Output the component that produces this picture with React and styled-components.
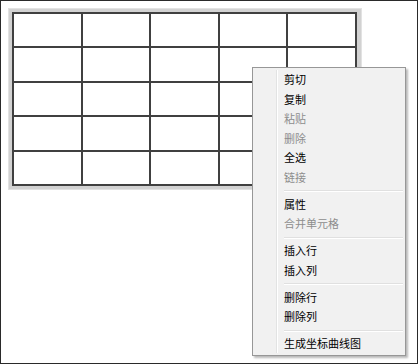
import React from "react";
import styled, { createGlobalStyle } from "styled-components";

const GlobalStyle = createGlobalStyle`
  html, body {
    margin: 0;
    padding: 0;
    background: #ffffff;
  }
`;

const Page = styled.div`
  position: relative;
  box-sizing: border-box;
  width: 418px;
  height: 364px;
  padding: 7px;
  border: 1px solid #2a2a2a;
  background: #ffffff;
  font-family: "Noto Sans CJK SC", "Noto Sans", sans-serif;
`;

const Frame = styled.div`
  display: inline-block;
  padding: 4px 5px 4px 4px;
  background: #d2d2d2;
  box-shadow: inset 0 0 0 1px #e2e2e2;
`;

const Grid = styled.div`
  display: grid;
  grid-template-columns: repeat(5, 1fr);
  grid-template-rows: repeat(5, 1fr);
  width: 345px;
  height: 174px;
  box-sizing: border-box;
  border-top: 2px solid #404040;
  border-left: 2px solid #404040;
  background: #ffffff;
`;

const Cell = styled.div`
  border-right: 2px solid #404040;
  border-bottom: 2px solid #404040;
`;

const Menu = styled.div`
  position: absolute;
  left: 251px;
  top: 66px;
  width: 154px;
  box-sizing: border-box;
  padding: 2px 2px 1px 2px;
  background: #f1f1f1;
  border: 1px solid #979797;
  box-shadow: 2px 2px 2px rgba(0, 0, 0, 0.28);
  display: flex;
  flex-direction: column;

  &::before {
    content: "";
    position: absolute;
    top: 2px;
    bottom: 2px;
    left: 23px;
    width: 1px;
    background: #e2e3e3;
    box-shadow: 1px 0 0 #ffffff;
  }
`;

const Item = styled.div`
  height: 19.5px;
  line-height: 19px;
  padding-left: 29px;
  font-size: 11px;
  color: ${(p) => (p.disabled ? "#8d8d8d" : "#000000")};
  white-space: nowrap;
`;

const Separator = styled.div`
  height: 7.5px;
  display: flex;
  align-items: center;
  margin-left: 29px;

  &::after {
    content: "";
    flex: 1;
    height: 1px;
    background: #e0e0e0;
    box-shadow: 0 1px 0 #ffffff;
  }
`;

const groups = [
  [
    { label: "剪切" },
    { label: "复制" },
    { label: "粘贴", disabled: true },
    { label: "删除", disabled: true },
    { label: "全选" },
    { label: "链接", disabled: true },
  ],
  [{ label: "属性" }, { label: "合并单元格", disabled: true }],
  [{ label: "插入行" }, { label: "插入列" }],
  [{ label: "删除行" }, { label: "删除列" }],
  [{ label: "生成坐标曲线图" }],
];

export default function App() {
  return (
    <Page>
      <GlobalStyle />
      <Frame>
        <Grid>
          {Array.from({ length: 25 }).map((_, i) => (
            <Cell key={i} />
          ))}
        </Grid>
      </Frame>
      <Menu>
        {groups.map((group, gi) => (
          <React.Fragment key={gi}>
            {gi > 0 && <Separator />}
            {group.map((item) => (
              <Item key={item.label} disabled={item.disabled}>
                {item.label}
              </Item>
            ))}
          </React.Fragment>
        ))}
      </Menu>
    </Page>
  );
}
